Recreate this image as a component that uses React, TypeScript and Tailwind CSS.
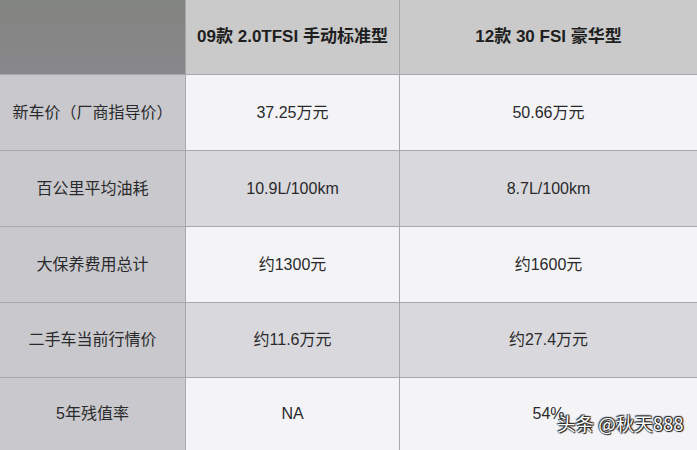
const rows = [
  { label: "新车价（厂商指导价）", a: "37.25万元", b: "50.66万元", h: "h-[76px]" },
  { label: "百公里平均油耗", a: "10.9L/100km", b: "8.7L/100km", h: "h-[76px]" },
  { label: "大保养费用总计", a: "约1300元", b: "约1600元", h: "h-[76px]" },
  { label: "二手车当前行情价", a: "约11.6万元", b: "约27.4万元", h: "h-[75px]" },
  { label: "5年残值率", a: "NA", b: "54%", h: "h-[73px]" },
];

export default function App() {
  return (
    <div className="relative w-[697px] h-[450px] overflow-hidden bg-[#f2f2f4] text-[#2a2a2c] font-['Liberation_Sans','Noto_Sans_CJK_SC',sans-serif]">
      <div className="grid grid-cols-[186px_214px_297px]">
        {/* header */}
        <div className="h-[74px] bg-gradient-to-b from-[#838581] to-[#88878b] border-r border-[#a6a6a8]" />
        <div className="h-[74px] flex items-center justify-center bg-[#c9cac9] border-r border-[#a8a8aa] text-[17px] font-bold text-[#1e1e1e]">
          09款 2.0TFSI 手动标准型
        </div>
        <div className="h-[74px] flex items-center justify-center bg-[#c9cac9] text-[17px] font-bold text-[#1e1e1e]">
          12款 30 FSI 豪华型
        </div>

        {rows.map((r, i) => {
          const light = i % 2 === 0;
          const cell = light ? "bg-[#f4f4f6]" : "bg-[#d9d9dd]";
          return (
            <div key={r.label} className="contents">
              <div
                className={`${r.h} flex items-center justify-center bg-[#c9c9cd] border-t border-r border-[#a9a9ab] text-[16px]`}
              >
                {r.label}
              </div>
              <div
                className={`${r.h} flex items-center justify-center ${cell} border-t border-r border-[#a9a9ab] text-[16px]`}
              >
                {r.a}
              </div>
              <div
                className={`${r.h} flex items-center justify-center ${cell} border-t border-[#a9a9ab] text-[16px]`}
              >
                {r.b}
              </div>
            </div>
          );
        })}
      </div>

      {/* watermark */}
      <div className="absolute left-[557px] top-[410px] text-[18.5px] text-white font-['Noto_Sans_CJK_SC',sans-serif] [text-shadow:0_0_1px_#111,1px_1px_1px_#111,-1px_-1px_1px_#333,1px_-1px_1px_#333]">
        头条 @秋天888
      </div>
    </div>
  );
}
